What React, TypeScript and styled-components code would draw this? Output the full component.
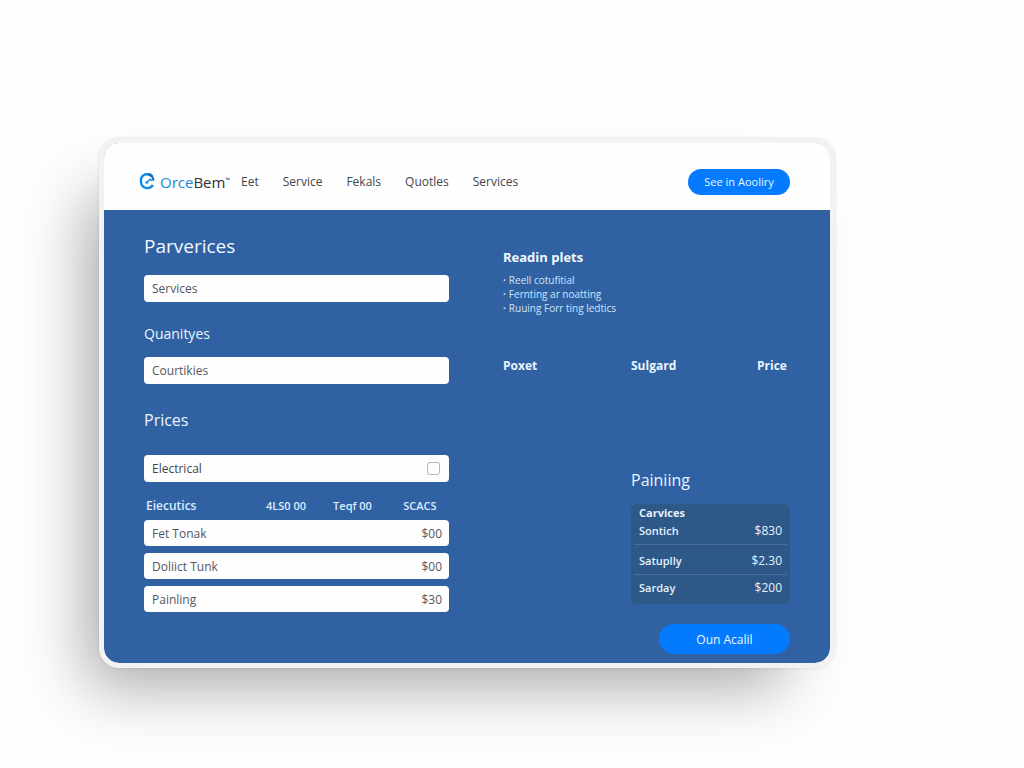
import React from "react";
import styled, { createGlobalStyle } from "styled-components";

const Global = createGlobalStyle`
  * { box-sizing: border-box; }
  body { margin: 0; background: #fefefe; font-family: "Open Sans", "Noto Sans", sans-serif; color: #43464d; }
  h1, h2, h3, ul, p { margin: 0; padding: 0; font-weight: 400; }
`;

const Page = styled.main`
  min-height: 100vh;
  padding: 138px 189px 99px 99px;
  overflow: hidden;
`;

const Window = styled.div`
  overflow: hidden;
  border: 5px solid #f2f2f3;
  border-radius: 20px;
  background: #3062a3;
  background-clip: padding-box;
  box-shadow: -32px 38px 60px -20px rgba(0, 0, 0, 0.34), 0 0 3px rgba(0, 0, 0, 0.12);
`;

const Header = styled.header`
  display: flex;
  align-items: center;
  height: 67px;
  padding: 10px 40px 0 35px;
  background: #fefefe;
`;

const Brand = styled.a`
  display: flex;
  align-items: center;
  gap: 4px;
  color: #2d3138;
  font-size: 15px;
  line-height: 20px;
  text-decoration: none;
  span { color: #1688e0; }
  sup { font-size: 6px; line-height: 6px; vertical-align: 6px; }
`;

const Nav = styled.nav`
  display: flex;
  flex: 1;
  gap: 24px;
  margin-left: 11px;
`;

const NavLink = styled.a`
  color: #43464d;
  font-size: 12px;
  line-height: 18px;
  text-decoration: none;
`;

const Pill = styled.button<{ $large?: boolean }>`
  width: ${(p) => (p.$large ? 131 : 102)}px;
  height: ${(p) => (p.$large ? 30 : 26)}px;
  padding: 0;
  border: 0;
  border-radius: 15px;
  background: #047bfe;
  color: #e9f6ff;
  font: ${(p) => (p.$large ? 12 : 11)}px "Open Sans", sans-serif;
`;

const Body = styled.div`
  display: grid;
  grid-template-columns: 305fr 287fr;
  column-gap: 54px;
  padding: 22px 40px 9px;
`;

const Column = styled.section`
  display: flex;
  flex-direction: column;
`;

const Title = styled.h1`
  margin-bottom: 4px;
  color: #f1f8ff;
  font-size: 19px;
  line-height: 28px;
`;

const Label = styled.label`
  margin-top: 20px;
  color: #e9f4ff;
  font-size: 14px;
  line-height: 24px;
`;

const SectionTitle = styled.h2<{ $spaced?: boolean }>`
  margin-top: ${(p) => (p.$spaced ? 24 : 0)}px;
  color: #e9f4ff;
  font-size: 16px;
  line-height: 24px;
`;

const Field = styled.input`
  width: 100%;
  height: 27px;
  margin-top: 11px;
  padding: 0 8px;
  border: 0;
  border-radius: 4px;
  background: #fefefe;
  color: #53565e;
  font: 12px "Open Sans", sans-serif;
`;

const CheckRow = styled.label`
  display: flex;
  align-items: center;
  justify-content: space-between;
  height: 27px;
  margin-top: 23px;
  padding: 0 9px 0 8px;
  border-radius: 4px;
  background: #fefefe;
  font-size: 12px;
`;

const Check = styled.input`
  appearance: none;
  width: 13px;
  height: 13px;
  margin: 0;
  border: 1px solid #b4b7bc;
  border-radius: 3px;
`;

const PriceTable = styled.table`
  width: 100%;
  margin-top: 8px;
  border-collapse: separate;
  border-spacing: 0 7px;
  table-layout: fixed;
  font-size: 12px;
  th {
    height: 16px;
    padding: 2px 0 0;
    color: #dcedff;
    font-size: 11px;
    font-weight: 600;
    line-height: 14px;
    text-align: left;
  }
  th:first-child { padding-left: 2px; font-size: 12px; }
  td {
    height: 26px;
    padding: 0 8px;
    background: #fefefe;
    color: #53565e;
  }
  td:first-child { border-radius: 4px 0 0 4px; }
  td:last-child { border-radius: 0 4px 4px 0; text-align: right; padding-right: 7px; }
`;

const ListTitle = styled.h2`
  margin-top: 15px;
  color: #f1f8ff;
  font-size: 13px;
  font-weight: 700;
  line-height: 20px;
`;

const List = styled.ul`
  margin-top: 6px;
  list-style: none;
  color: #cfe4fb;
  font-size: 10px;
  line-height: 14px;
  li::before { content: "·"; font-weight: 700; margin-right: 3px; }
`;

const Heads = styled.div`
  display: grid;
  grid-template-columns: 128fr 126fr 33fr;
  margin-top: 42px;
  color: #e9f4ff;
  font-size: 12px;
  font-weight: 700;
  line-height: 18px;
`;

const Quote = styled.section`
  width: 159px;
  margin-top: 93px;
  align-self: flex-end;
`;

const QuoteBox = styled.div`
  margin-top: 12px;
  padding: 1px 3px 0;
  height: 100px;
  border-radius: 6px;
  background: #2e5887;
  color: #e3f1ff;
`;

const QuoteTitle = styled.h3`
  padding-left: 5px;
  font-size: 11px;
  font-weight: 700;
  line-height: 16px;
`;

const QuoteTable = styled.table`
  width: 100%;
  border-collapse: collapse;
  font-size: 11px;
  font-weight: 600;
  td { height: 30px; padding: 2px 5px 0; }
  tr:first-child td { height: 23px; padding: 0 5px 3px; }
  tr:last-child td { height: 27px; padding: 0 5px; }
  td:last-child { font-size: 12px; font-weight: 400; text-align: right; }
  tr + tr td { border-top: 1px solid #4770a0; }
`;

const Action = styled.div`
  display: flex;
  justify-content: flex-end;
  margin-top: 20px;
`;

const Logo = () => (
  <svg width="17" height="17" viewBox="0 0 17 17" fill="none" aria-hidden="true">
    <path d="M13.4 3.2A6.6 6.6 0 0 0 2 8.6a6.4 6.4 0 0 0 11.9 3.3" stroke="#0f8ae6" strokeWidth="2.4" />
    <path d="M9 1.7a7 7 0 0 1 5.7 5" stroke="#1767ad" strokeWidth="2" />
    <path d="M14.9 7H11" stroke="#1878c4" strokeWidth="1.4" />
    <path d="M8 9.4 11.6 5.8" stroke="#1f84cf" strokeWidth="1.4" />
    <circle cx="7.8" cy="9.5" r="1.4" fill="#1f92e6" />
  </svg>
);

const links = ["Eet", "Service", "Fekals", "Quotles", "Services"];
const rows = [["Fet Tonak", "$00"], ["Doliict Tunk", "$00"], ["Painling", "$30"]];
const quotes = [["Sontich", "$830"], ["Satuplly", "$2.30"], ["Sarday", "$200"]];

export default function App() {
  return (
    <Page>
      <Global />
      <Window>
        <Header>
          <Brand href="#">
            <Logo />
            <div><span>Orce</span>Bem<sup>™</sup></div>
          </Brand>
          <Nav>{links.map((l) => <NavLink href="#" key={l}>{l}</NavLink>)}</Nav>
          <Pill>See in Aooliry</Pill>
        </Header>
        <Body>
          <Column>
            <Title>Parverices</Title>
            <Field aria-label="Parverices" defaultValue="Services" />
            <Label htmlFor="quantity">Quanityes</Label>
            <Field id="quantity" defaultValue="Courtikies" />
            <SectionTitle $spaced>Prices</SectionTitle>
            <CheckRow>Electrical<Check type="checkbox" /></CheckRow>
            <PriceTable>
              <colgroup><col width="40%" /><col width="22%" /><col width="23%" /><col width="15%" /></colgroup>
              <thead><tr><th>Eiecutics</th><th>4LS0 00</th><th>Teqf 00</th><th>SCACS</th></tr></thead>
              <tbody>{rows.map(([n, p]) => <tr key={n}><td colSpan={3}>{n}</td><td>{p}</td></tr>)}</tbody>
            </PriceTable>
          </Column>
          <Column>
            <ListTitle>Readin plets</ListTitle>
            <List><li>Reell cotufitial</li><li>Fernting ar noatting</li><li>Ruuing Forr ting ledtics</li></List>
            <Heads><span>Poxet</span><span>Sulgard</span><span>Price</span></Heads>
            <Quote>
              <SectionTitle>Painiing</SectionTitle>
              <QuoteBox>
                <QuoteTitle>Carvices</QuoteTitle>
                <QuoteTable><tbody>{quotes.map(([n, p]) => <tr key={n}><td>{n}</td><td>{p}</td></tr>)}</tbody></QuoteTable>
              </QuoteBox>
            </Quote>
            <Action><Pill $large>Oun Acalil</Pill></Action>
          </Column>
        </Body>
      </Window>
    </Page>
  );
}
